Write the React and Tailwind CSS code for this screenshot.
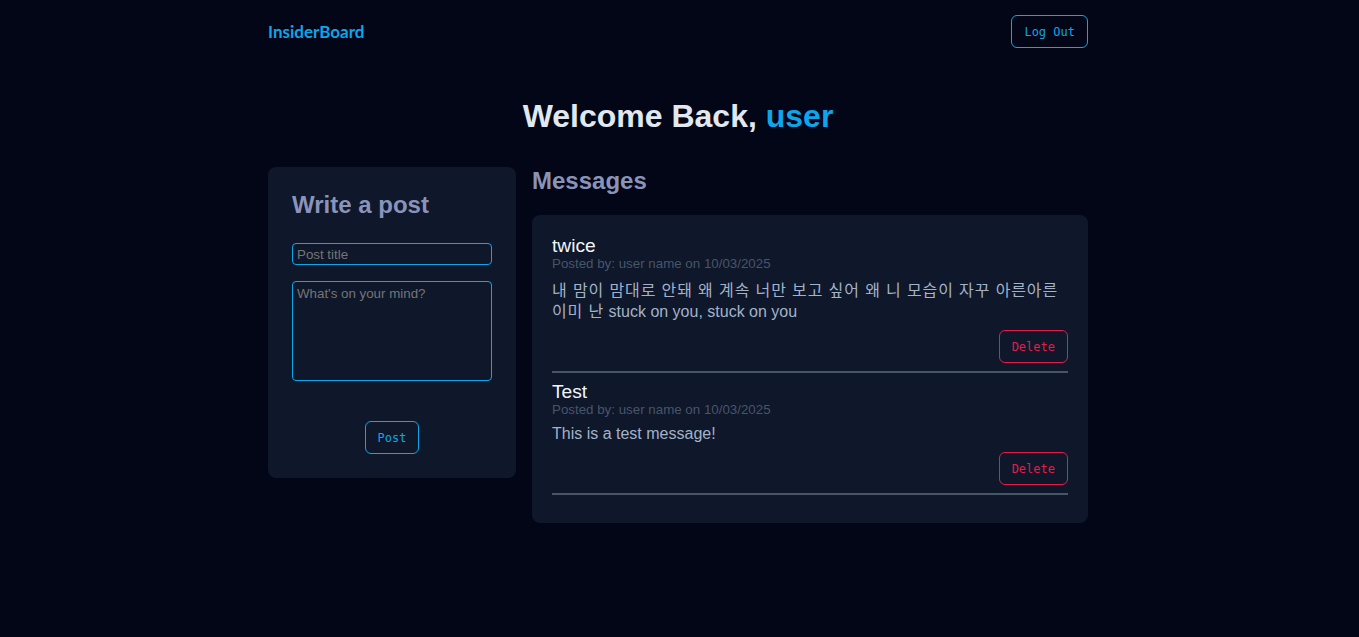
import React from "react";

const messages = [
  {
    title: "twice",
    meta: "Posted by: user name on 10/03/2025",
    parts: [
      { ko: true, text: "내 맘이 맘대로 안돼 왜 계속 너만 보고 싶어 왜 니 모습이 자꾸 아른아른 이미 난" },
      { ko: false, text: " stuck on you, stuck on you" },
    ],
    lead: "leading-[21px]",
  },
  {
    title: "Test",
    meta: "Posted by: user name on 10/03/2025",
    parts: [{ ko: false, text: "This is a test message!" }],
    lead: "leading-[18.4px]",
  },
];

const sans = "font-['Liberation_Sans','Noto_Sans_CJK_KR',sans-serif]";
const mono = "font-['DejaVu_Sans_Mono',monospace]";

export default function App() {
  return (
    <div className={`min-h-screen bg-[#020617] ${sans}`}>
      <div className="w-[820px] ml-[calc(50%-411.5px)]">
        <header className="flex items-center justify-between py-[15px]">
          <div className="font-['Lato',sans-serif] font-bold text-[17px] text-[#0ea5e9]">InsiderBoard</div>
          <button className={`${mono} text-[12px] leading-[15px] text-[#0ea5e9] border border-[#0ea5e9] rounded-md px-3 pt-[9px] pb-[7px]`}>
            Log Out
          </button>
        </header>

        <h1 className="mt-[35px] mb-[32px] text-center text-[32px] font-bold text-[#e2e8f0] leading-[1.15]">
          Welcome Back, <span className="text-[#0ea5e9]">user</span>
        </h1>

        <div className="flex gap-4 items-start">
          <div className="w-[248px] shrink-0 bg-[#0f172a] rounded-lg p-6 flex flex-col">
            <h2 className="text-[24px] font-bold text-[#8a93b8] leading-[28.6px]">Write a post</h2>
            <input
              placeholder="Post title"
              className="mt-6 w-[200px] h-[22px] px-1 text-[13.33px] bg-transparent border border-[#0ea5e9] rounded-[4px] text-slate-300 placeholder:text-[#757575] outline-none"
            />
            <textarea
              placeholder="What's on your mind?"
              className="mt-4 w-[200px] h-[100px] px-1 py-[2px] text-[13.33px] bg-transparent border border-[#0ea5e9] rounded-[4px] text-slate-300 placeholder:text-[#757575] outline-none resize-none"
            />
            <div className="mt-10 flex justify-center">
              <button className={`${mono} text-[12px] leading-[15px] text-[#0ea5e9] border border-[#0ea5e9] rounded-md px-3 pt-[9px] pb-[7px]`}>
                Post
              </button>
            </div>
          </div>

          <div className="flex-1">
            <h2 className="text-[24px] font-bold text-[#8a93b8] leading-[28.6px]">Messages</h2>
            <div className="mt-5 bg-[#0f172a] rounded-lg p-5">
              {messages.map((m) => (
                <div key={m.title} className="pb-2 mb-2 border-b-2 border-[#475569]">
                  <div className="text-[19.2px] leading-[22px] text-[#f1f5f9]">{m.title}</div>
                  <div className="text-[13.33px] leading-[14.5px] text-[#475569]">{m.meta}</div>
                  <p className={`mt-2 text-[16px] ${m.lead} text-[#a3b2c8]`}>
                    {m.parts.map((p, i) => (
                      <span key={i} className={p.ko ? "tracking-[0.88px]" : ""}>
                        {p.text}
                      </span>
                    ))}
                  </p>
                  <div className="mt-2 flex justify-end">
                    <button className={`${mono} text-[12px] leading-[15px] text-[#e11d48] border border-[#e11d48] rounded-md px-3 pt-[9px] pb-[7px]`}>
                      Delete
                    </button>
                  </div>
                </div>
              ))}
            </div>
          </div>
        </div>
      </div>
    </div>
  );
}
